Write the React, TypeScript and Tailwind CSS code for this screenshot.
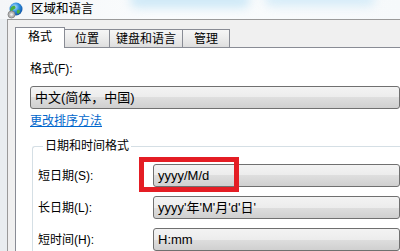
import React from "react"

const font = "font-['Liberation_Sans','Noto_Sans_CJK_SC',sans-serif]"

function Globe() {
  return (
    <svg width="16" height="17" viewBox="0 0 16 17">
      <defs>
        <radialGradient id="g" cx="0.4" cy="0.35" r="0.7">
          <stop offset="0" stopColor="#bfe6ff" />
          <stop offset="0.5" stopColor="#2f8fe0" />
          <stop offset="1" stopColor="#0b4c9c" />
        </radialGradient>
      </defs>
      <circle cx="9" cy="7" r="6.5" fill="url(#g)" />
      <path d="M5 4.5c1.5-1 3-1 3.5 0.5s-1 2-2 2.5-1 2-2.5 1.5S3.5 5.5 5 4.5z" fill="#4caf3e" />
      <path d="M10.5 8c1-0.5 2.5 0 2.5 1.5s-1.5 2.5-2.5 2S9.5 8.5 10.5 8z" fill="#4caf3e" />
      <circle cx="4.5" cy="12.5" r="3.5" fill="#b8b8b8" stroke="#7a7a7a" strokeWidth="0.8" />
      <circle cx="4.5" cy="12.5" r="1.3" fill="#eeeeee" />
    </svg>
  )
}

function Combo({ text }: { text: string }) {
  return (
    <div className="flex-1 h-[23px] flex items-center pl-[4px] rounded-[3px] border border-[#707070] bg-[linear-gradient(to_bottom,#f3f3f3_0%,#ececec_50%,#dedede_50%,#d0d0d0_100%)] text-[13px] text-black whitespace-nowrap">
      {text}
    </div>
  )
}

const tabs = ["位置", "键盘和语言", "管理"]
const tabWidths = ["w-[45px]", "w-[73px]", "w-[47px]"]

export default function App() {
  return (
    <div className={`w-[400px] h-[251px] overflow-hidden flex flex-col bg-[#e9edf0] ${font} text-[12px] text-black`}>
      {/* Title bar */}
      <div className="relative h-[27px] flex items-center pl-[7px] gap-[8px] bg-[linear-gradient(to_right,#f4f6f8,#fafcfd_40%,#f6f9fb)] overflow-hidden">
        <div className="absolute left-[130px] top-[-8px] w-[120px] h-[16px] rounded-full bg-[#cfe9f7] blur-[5px]" />
        <div className="absolute left-[265px] top-[-8px] w-[110px] h-[14px] rounded-full bg-[#d6ecf8] blur-[5px]" />
        <div className="relative mt-[2px]">
          <Globe />
        </div>
        <span className="relative text-[12.5px] leading-none">区域和语言</span>
      </div>

      {/* Window body */}
      <div className="flex-1 ml-[7px] border-l border-t border-[#9a9a9a] bg-[#f0f0f0] pl-[7px] pt-[6px] flex flex-col">
        {/* Tabs */}
        <div className="flex items-end h-[21px]">
          <div className="relative z-10 w-[50px] h-[21px] -mb-px bg-white border border-b-0 border-[#898c95] flex items-center justify-center pb-[2px]">
            格式
          </div>
          {tabs.map((t, i) => (
            <div
              key={t}
              className={`${tabWidths[i]} h-[18px] border border-l-0 border-b-0 border-[#898c95] bg-[linear-gradient(to_bottom,#f6f6f6_0%,#ececec_50%,#dedede_100%)] flex items-center justify-center`}
            >
              {t}
            </div>
          ))}
        </div>

        {/* Panel */}
        <div className="flex-1 bg-white border-l border-t border-[#898c95] pl-[14px] flex flex-col">
          <div className="mt-[13px] h-[16px] leading-[16px]">格式(F):</div>
          <div className="mt-[9px] flex">
            <Combo text="中文(简体，中国)" />
          </div>
          <div className="mt-[4px] h-[16px] leading-[16px] text-[#0066cc] underline">更改排序方法</div>

          <fieldset className="mt-[9px] ml-[2px] border border-r-0 border-b-0 border-[#d5dfe5] rounded-tl-[3px] pl-[5px]">
            <legend className="ml-[5px] px-[2px] h-[16px] leading-[16px]">日期和时间格式</legend>
            <div className="mt-[10px] flex flex-col gap-[9px]">
              <div className="flex items-center">
                <span className="w-[115px]">短日期(S):</span>
                <div className="relative flex-1 flex">
                  <Combo text="yyyy/M/d" />
                  <div className="absolute left-[-14px] top-[-7px] w-[100px] h-[35px] border-[5px] border-[#e41d24]" />
                </div>
              </div>
              <div className="flex items-center">
                <span className="w-[115px]">长日期(L):</span>
                <Combo text="yyyy'年'M'月'd'日'" />
              </div>
              <div className="flex items-center">
                <span className="w-[115px]">短时间(H):</span>
                <Combo text="H:mm" />
              </div>
            </div>
          </fieldset>
        </div>
      </div>
    </div>
  )
}
